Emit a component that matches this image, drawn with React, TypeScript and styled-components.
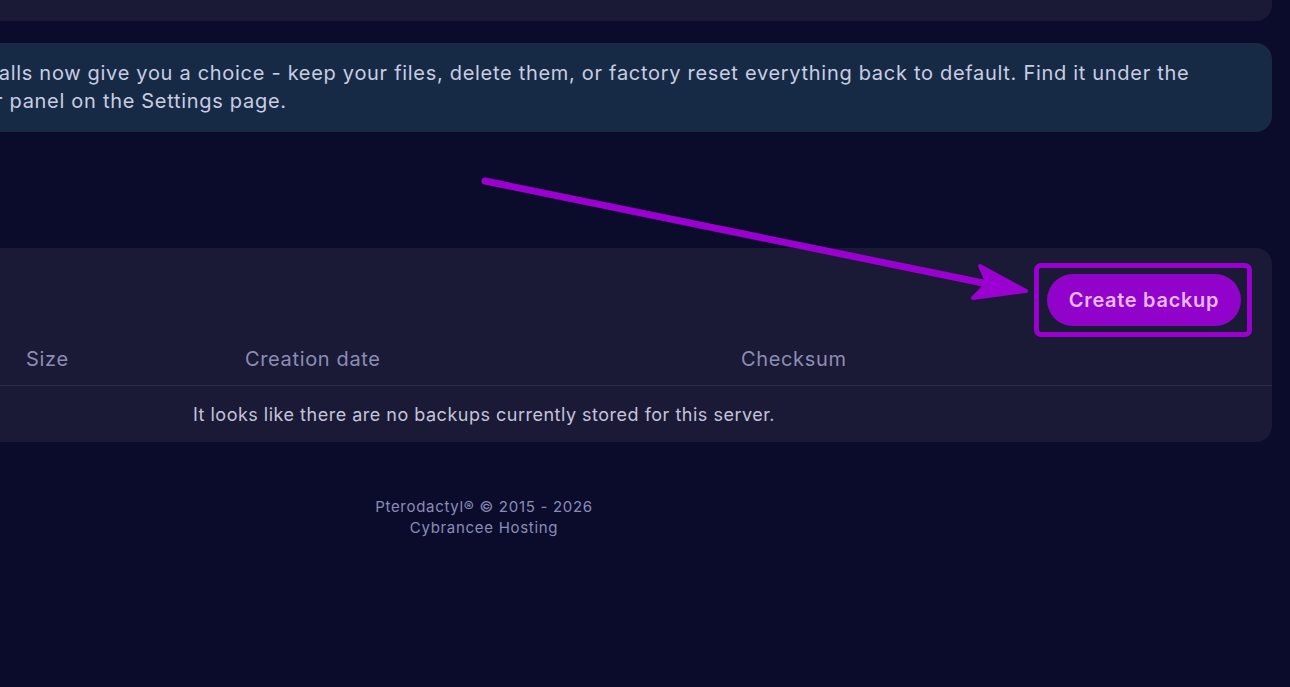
import styled, { createGlobalStyle } from "styled-components";

const GlobalStyle = createGlobalStyle`
  html, body {
    margin: 0;
    padding: 0;
    background: #0b0c2b;
  }
  body {
    font-family: Inter, "Noto Sans", sans-serif;
    overflow: hidden;
  }
`;

const Page = styled.div`
  position: relative;
  width: 1290px;
  height: 687px;
  overflow: hidden;
  background: #0b0c2b;
`;

// content column is wider than the window, its left part is scrolled away
const Content = styled.div`
  display: flex;
  flex-direction: column;
  width: 1576px;
  margin-left: -304px;
`;

const Card = styled.div`
  background: #1b1a36;
  border-radius: 16px;
`;

const TopCard = styled(Card)`
  height: 60px;
  margin-top: -39px;
`;

const Notice = styled.div`
  margin-top: 22px;
  background: #172a45;
  border-radius: 16px;
  padding: 16px 24px 17px 149px;
  color: #c9cde2;
  font-size: 20px;
  line-height: 28px;
  letter-spacing: 0.7px;
`;

const NoticeLine = styled.div`
  white-space: nowrap;
`;

const BackupsCard = styled(Card)`
  margin-top: 116px;
  display: flex;
  flex-direction: column;
`;

const Toolbar = styled.div`
  display: flex;
  justify-content: flex-end;
  padding: 26px 31px 0 0;
`;

const CreateButton = styled.button`
  position: relative;
  width: 194px;
  height: 52px;
  padding: 0;
  border: none;
  border-radius: 26px;
  background: #9103cb;
  color: #e6b8f2;
  font-family: Inter, "Noto Sans", sans-serif;
  font-size: 20px;
  font-weight: 600;
  letter-spacing: 0.7px;
  cursor: pointer;
`;

const Highlight = styled.span`
  position: absolute;
  left: -13px;
  top: -11px;
  right: -11px;
  bottom: -11px;
  border: 5px solid #9a00cf;
  border-radius: 7px;
  pointer-events: none;
`;

const HeadRow = styled.div`
  display: grid;
  grid-template-columns: 330px 219px 496px 1fr;
  height: 60px;
  padding-top: 6px;
  box-sizing: border-box;
  align-items: center;
  border-bottom: 1px solid #2c2b4a;
  color: #8c8db5;
  font-size: 20px;
  letter-spacing: 0.65px;
`;

const EmptyText = styled.div`
  height: 56px;
  display: flex;
  align-items: center;
  justify-content: center;
  color: #c3c4da;
  font-size: 18px;
  letter-spacing: 0.5px;
`;

const Footer = styled.footer`
  margin-top: 54px;
  text-align: center;
  color: #8a8db8;
  font-size: 15px;
  line-height: 21px;
  letter-spacing: 0.7px;
`;

const ArrowLayer = styled.svg`
  position: absolute;
  left: 0;
  top: 0;
  pointer-events: none;
`;

function PointerArrow() {
  return (
    <ArrowLayer width="1290" height="687" viewBox="0 0 1290 687">
      <line
        x1="485"
        y1="181"
        x2="988"
        y2="284"
        stroke="#9a00cf"
        strokeWidth="7"
        strokeLinecap="round"
      />
      <polygon
        points="980,266 1026,291 973,298 985,286 987,282"
        fill="#9a00cf"
        stroke="#9a00cf"
        strokeWidth="4"
        strokeLinejoin="round"
      />
    </ArrowLayer>
  );
}

export default function App() {
  return (
    <Page>
      <GlobalStyle />
      <Content>
        <TopCard />
        <Notice>
          <NoticeLine>
            Updates: reinstalls now give you a choice - keep your files, delete
            them, or factory reset everything back to default. Find it under the
          </NoticeLine>
          <NoticeLine>Reinstall Server panel on the Settings page.</NoticeLine>
        </Notice>
        <BackupsCard>
          <Toolbar>
            <CreateButton>
              Create backup
              <Highlight />
            </CreateButton>
          </Toolbar>
          <HeadRow>
            <span />
            <span>Size</span>
            <span>Creation date</span>
            <span>Checksum</span>
          </HeadRow>
          <EmptyText>
            It looks like there are no backups currently stored for this server.
          </EmptyText>
        </BackupsCard>
        <Footer>
          Pterodactyl® © 2015 - 2026
          <br />
          Cybrancee Hosting
        </Footer>
      </Content>
      <PointerArrow />
    </Page>
  );
}
